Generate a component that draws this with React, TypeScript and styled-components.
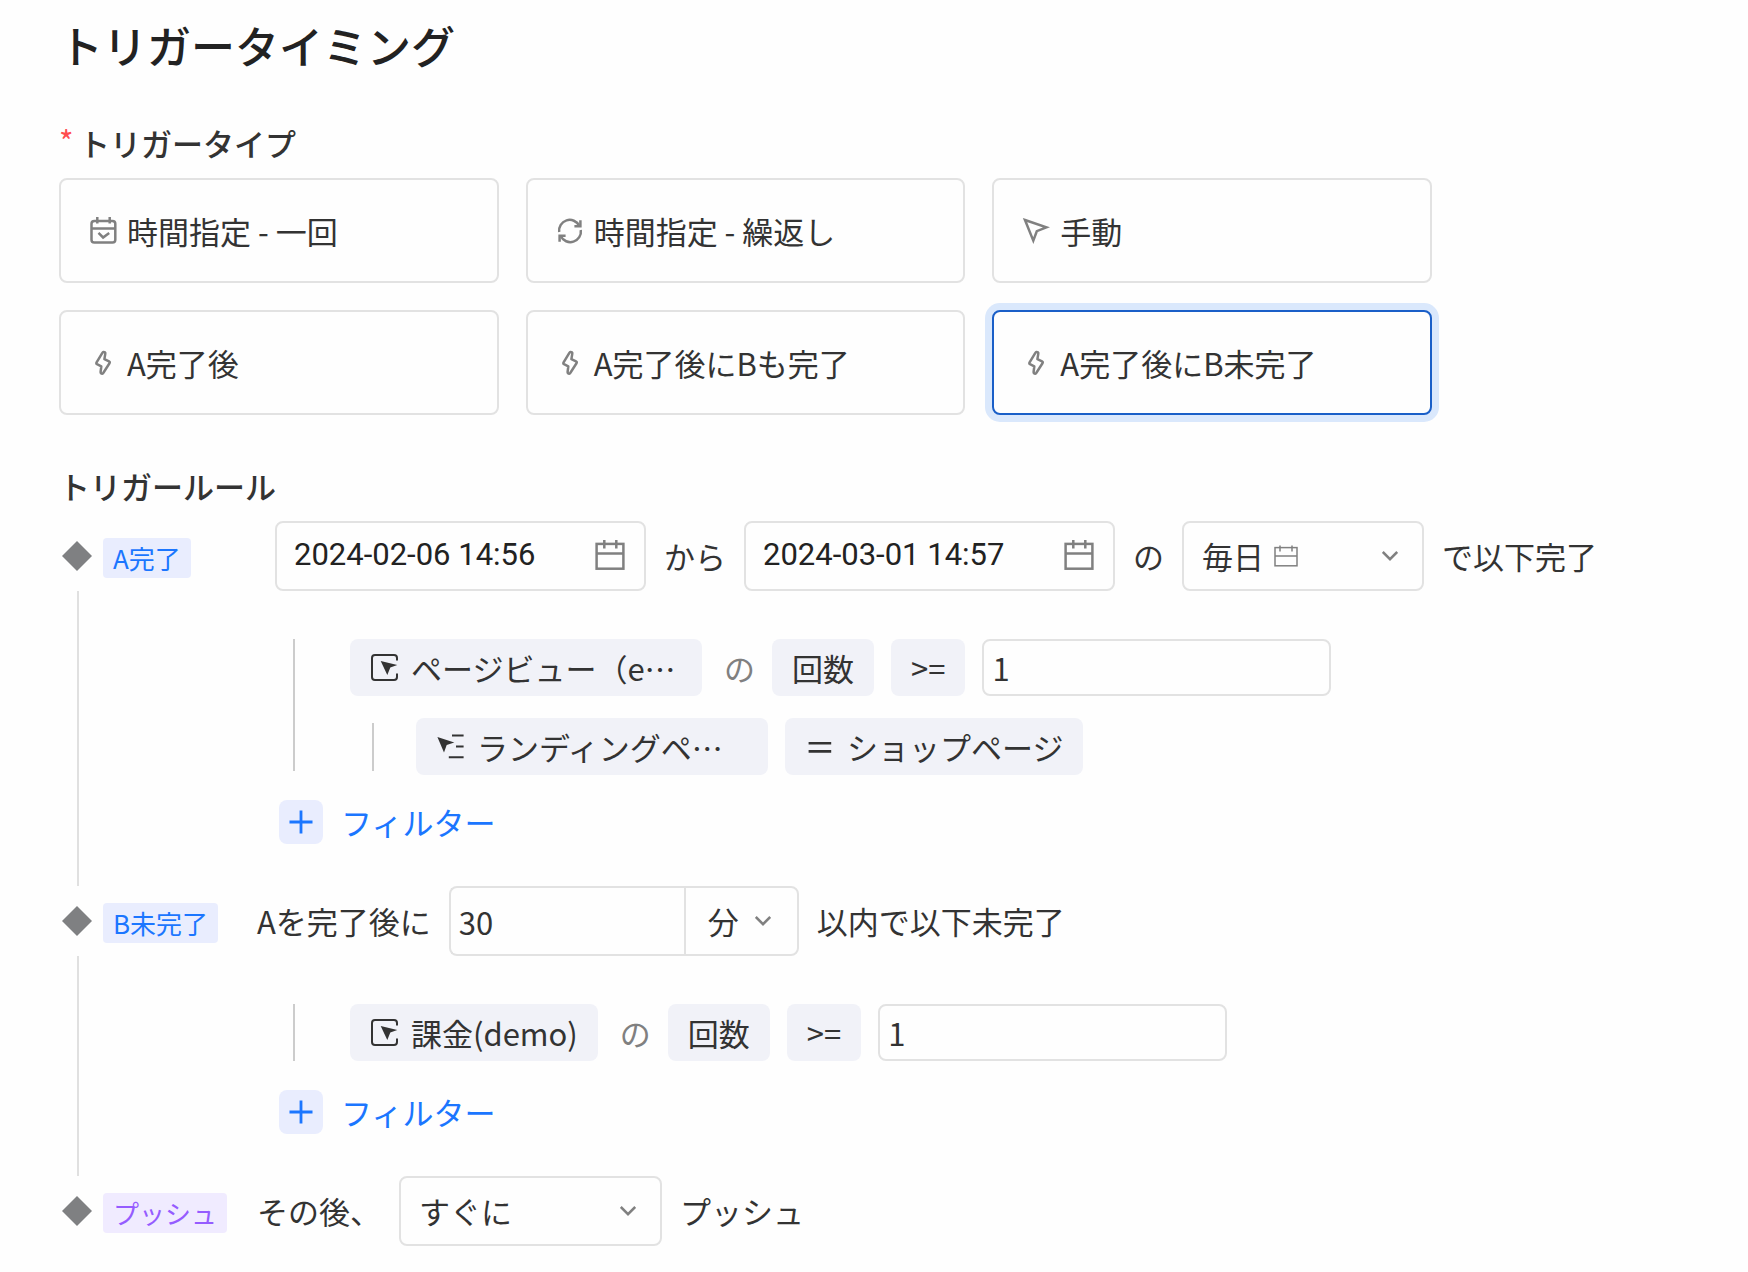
import React, { useState } from 'react';
import styled, { createGlobalStyle } from 'styled-components';

const color = {
  page: '#fefefe',
  title: '#222222',
  text: '#333333',
  muted: '#808080',
  border: '#e2e2e2',
  rail: '#e0e0e0',
  guide: '#cccccc',
  chip: '#f1f2f8',
  blue: '#1b76ff',
  blueSoft: '#e9edfe',
  blueStrong: '#1a5fc8',
  ring: '#dae8fc',
  purple: '#955cff',
  purpleSoft: '#f0ebff',
  red: '#ff4d4f',
};

const GlobalStyle = createGlobalStyle`
  *, *::before, *::after { box-sizing: border-box; }
  body {
    margin: 0;
    background: ${color.page};
    color: ${color.text};
    font-family: 'Noto Sans CJK JP', sans-serif;
    font-size: 31px;
    line-height: 44px;
  }
  input, select, button { font: inherit; color: inherit; }
`;

/* ---------- Page ---------- */

const Page = styled.main`
  padding: 15px 59px 26px;
`;

const Title = styled.h1`
  margin: 0 0 46px;
  color: ${color.title};
  font-size: 44px;
  font-weight: 500;
  line-height: 60px;
`;

const SectionTitle = styled.h2`
  display: flex;
  gap: 6px;
  margin: 0 0 13px;
  font-size: 31px;
  font-weight: 500;
  line-height: 44px;
`;

const Required = styled.span`
  width: 14px;
  color: ${color.red};
  font-size: 31px;
  font-weight: 400;
  line-height: 40px;
`;

/* ---------- Trigger type cards ---------- */

const CardGrid = styled.div`
  display: grid;
  grid-template-columns: repeat(3, minmax(0, 1fr));
  grid-auto-rows: 105px;
  gap: 27px;
  max-width: 1373px;
  margin-bottom: 49px;
`;

const Card = styled.label<{ $selected: boolean }>`
  display: flex;
  align-items: center;
  gap: 10px;
  padding: 0 28px;
  border: 2px solid ${(p) => (p.$selected ? color.blueStrong : color.border)};
  border-radius: 8px;
  background: ${color.page};
  box-shadow: ${(p) => (p.$selected ? `0 0 0 7px ${color.ring}` : 'none')};
  cursor: pointer;
`;

const HiddenRadio = styled.input`
  position: absolute;
  opacity: 0;
  pointer-events: none;
`;

/* ---------- Steps ---------- */

const Step = styled.section`
  display: grid;
  grid-template-columns: 36px minmax(0, 1fr);
  column-gap: 8px;
`;

const Rail = styled.div`
  display: flex;
  flex-direction: column;
`;

const Marker = styled.div`
  display: flex;
  align-items: center;
  justify-content: center;
  height: 70px;
`;

const RailLine = styled.div`
  flex: 1;
  margin-left: 18px;
  border-left: 2px solid ${color.rail};
`;

const StepHead = styled.div`
  display: flex;
  align-items: center;
  height: 70px;
  white-space: nowrap;
`;

const TagCell = styled.div`
  flex: none;
  display: flex;
  width: 154px;
`;

const Tag = styled.span<{ $tone: 'blue' | 'purple' }>`
  margin-top: 4px;
  padding: 0 10px;
  border-radius: 4px;
  background: ${(p) => (p.$tone === 'blue' ? color.blueSoft : color.purpleSoft)};
  color: ${(p) => (p.$tone === 'blue' ? color.blue : color.purple)};
  font-size: 26px;
  line-height: 40px;
`;

const Sentence = styled.div<{ $indent?: boolean }>`
  display: flex;
  align-items: center;
  gap: 18px;
  padding-left: ${(p) => (p.$indent ? '18px' : '0')};
`;

const StepBody = styled.div`
  display: flex;
  flex-direction: column;
  align-items: flex-start;
  gap: 29px;
  padding: 48px 0 42px 176px;
`;

/* ---------- Fields ---------- */

const DateField = styled.label`
  display: flex;
  align-items: center;
  width: 371px;
  height: 70px;
  padding: 0 19px 2px 17px;
  border: 2px solid ${color.border};
  border-radius: 8px;
`;

const DateInput = styled.input`
  flex: 1;
  min-width: 0;
  padding: 0;
  border: 0;
  outline: 0;
  background: transparent;
  color: ${color.title};
  font-family: Roboto, sans-serif;
`;

const SelectWrap = styled.div<{ $width: number }>`
  position: relative;
  width: ${(p) => p.$width}px;
`;

const Select = styled.select<{ $joined?: boolean }>`
  display: block;
  width: 100%;
  height: 70px;
  padding: 0 48px 0 ${(p) => (p.$joined ? '22px' : '18px')};
  border: 2px solid ${color.border};
  border-radius: ${(p) => (p.$joined ? '0 8px 8px 0' : '8px')};
  background: transparent;
  outline: 0;
  appearance: none;
`;

const ChevronSlot = styled.span<{ $joined?: boolean }>`
  position: absolute;
  top: 0;
  right: ${(p) => (p.$joined ? '28px' : '26px')};
  bottom: 0;
  display: flex;
  align-items: center;
  pointer-events: none;
`;

const SelectIconSlot = styled(ChevronSlot)`
  right: auto;
  left: 92px;
`;

const InputGroup = styled.div`
  display: flex;
  width: 350px;
`;

const GroupInput = styled.input`
  flex: 1;
  min-width: 0;
  height: 70px;
  padding: 0 8px;
  border: 2px solid ${color.border};
  border-right: 0;
  border-radius: 8px 0 0 8px;
  background: transparent;
  outline: 0;
`;

const CountInput = styled.input`
  width: 349px;
  height: 57px;
  padding: 0 8px;
  border: 2px solid ${color.border};
  border-radius: 8px;
  background: transparent;
  outline: 0;
`;

/* ---------- Conditions ---------- */

const ConditionGroup = styled.div`
  display: flex;
  flex-direction: column;
  margin-left: 14px;
  padding-left: 55px;
  border-left: 2px solid ${color.guide};
`;

const SubGroup = styled.div`
  display: flex;
  margin: 27px 0 0 22px;
  padding-left: 42px;
  border-left: 2px solid ${color.guide};
`;

const ConditionRow = styled.div<{ $overhang?: boolean }>`
  display: flex;
  align-items: center;
  gap: 17px;
  margin: ${(p) => (p.$overhang ? '-5px 0 -4px' : '0')};
`;

const Chip = styled.button<{ $wide?: boolean }>`
  display: flex;
  align-items: center;
  gap: 13px;
  width: ${(p) => (p.$wide ? '352px' : 'auto')};
  height: 57px;
  padding: 0 20px;
  border: 0;
  border-radius: 8px;
  background: ${color.chip};
  white-space: nowrap;
  cursor: pointer;
`;

const Particle = styled.span`
  padding-left: 5px;
  color: ${color.muted};
`;

const AddFilter = styled.button`
  display: flex;
  align-items: center;
  gap: 18px;
  height: 44px;
  padding: 0;
  border: 0;
  background: transparent;
  color: ${color.blue};
  cursor: pointer;
`;

const PlusBox = styled.span`
  display: flex;
  align-items: center;
  justify-content: center;
  width: 44px;
  height: 44px;
  border-radius: 8px;
  background: ${color.blueSoft};
`;

/* ---------- Icons ---------- */

const Icon = styled.svg`
  flex: none;
  display: block;
  fill: none;
  stroke: ${color.muted};
  stroke-width: 2.5;
`;

const DarkIcon = styled(Icon)`
  stroke: ${color.text};
  stroke-width: 2;
`;

const CalendarCheckIcon = () => (
  <Icon width="28" height="28" viewBox="0 0 28 28" aria-hidden="true">
    <rect x="2.5" y="4" width="23.8" height="21.6" rx="2.8" />
    <path d="M2.3 11.5H26.3M8.3 0V6.5M20.7 0V6.5" />
    <path d="M9.5 15.9L14.1 20.5L20.2 15.9" />
  </Icon>
);

const RepeatIcon = () => (
  <Icon width="28" height="28" viewBox="0 0 28 28" aria-hidden="true">
    <path d="M3.2 15A10.6 10.6 0 0 1 23.2 8.8" />
    <path d="M24.4 3.2V9.2H18.4" />
    <path d="M24.8 13A10.6 10.6 0 0 1 4.8 19.2" />
    <path d="M3.6 24.8V18.8H9.6" />
  </Icon>
);

const CursorIcon = () => (
  <Icon width="28" height="28" viewBox="0 0 28 28" aria-hidden="true">
    <path d="M3 3L24.4 10.4L14.8 14.2L11.3 23.6Z" />
  </Icon>
);

const BoltIcon = () => (
  <Icon width="28" height="28" viewBox="0 0 28 28" strokeLinejoin="round" aria-hidden="true">
    <path d="M13.2 4.1Q14.4 2.3 16 3.4Q16.5 3.8 16.3 4.6L15.4 10.1L20 12.3Q21.3 13 20.5 14.2L14.4 23.7Q13.3 25.2 12 24.3Q11.5 23.8 11.6 23L12.3 17.3L8 15.2Q6.9 14.6 7.6 13.4Z" />
  </Icon>
);

const CalendarIcon = () => (
  <Icon width="30" height="30" viewBox="0 0 30 30" aria-hidden="true">
    <rect x="1.6" y="3.9" width="26.8" height="24.8" />
    <path d="M1.6 13.4H28.4M9.3 0V8.6M21.3 0V8.6" />
  </Icon>
);

const SmallCalendarIcon = () => (
  <Icon width="24" height="22" viewBox="0 0 24 22" aria-hidden="true">
    <g strokeWidth="1.5">
      <rect x="1" y="2.6" width="22" height="18.2" />
      <path d="M1 11H23M6 0.4V6.4M18 0.4V6.4" />
    </g>
  </Icon>
);

const ChevronIcon = () => (
  <Icon width="16" height="10" viewBox="0 0 16 10" aria-hidden="true">
    <path d="M0.8 1L8 8.2L15.2 1" />
  </Icon>
);

const DiamondIcon = () => (
  <svg width="30" height="30" viewBox="0 0 30 30" aria-hidden="true">
    <path d="M15 0L30 15L15 30L0 15Z" fill="#7f8082" />
  </svg>
);

const EventIcon = () => (
  <DarkIcon width="28" height="28" viewBox="0 0 28 28" aria-hidden="true">
    <path d="M27 6.5V4A3 3 0 0 0 24 1H5A3 3 0 0 0 2 4V23A3 3 0 0 0 5 26H24A3 3 0 0 0 27 23V19.5" />
    <path d="M10.7 7L27.3 11L20.3 13.5L17.3 21Z" fill={color.text} stroke="none" />
  </DarkIcon>
);

const PropertyIcon = () => (
  <DarkIcon width="28" height="28" viewBox="0 0 28 28" aria-hidden="true">
    <path d="M1.4 3.9L18.3 9.6L10.7 12L8 19.5Z" fill={color.text} stroke="none" />
    <path d="M16 2.6H27.6M20 13.5H27.6M12.8 24.2H27.6" />
  </DarkIcon>
);

const EqualsIcon = () => (
  <DarkIcon width="29" height="28" viewBox="0 0 29 28" aria-hidden="true">
    <path d="M3.6 10.2H26.2M3.6 18.4H26.2" strokeWidth="2.6" />
  </DarkIcon>
);

const PlusIcon = () => (
  <svg width="24" height="24" viewBox="0 0 24 24" aria-hidden="true">
    <path d="M12 0.5V23.5M0.5 12H23.5" stroke={color.blue} strokeWidth="2.8" />
  </svg>
);

/* ---------- Composed parts ---------- */

const triggerTypes = [
  { id: 'once', label: '時間指定 - 一回', icon: <CalendarCheckIcon /> },
  { id: 'repeat', label: '時間指定 - 繰返し', icon: <RepeatIcon /> },
  { id: 'manual', label: '手動', icon: <CursorIcon /> },
  { id: 'a', label: 'A完了後', icon: <BoltIcon /> },
  { id: 'ab', label: 'A完了後にBも完了', icon: <BoltIcon /> },
  { id: 'a-not-b', label: 'A完了後にB未完了', icon: <BoltIcon /> },
];

const DateTime = ({ label, value }: { label: string; value: string }) => (
  <DateField>
    <DateInput type="text" defaultValue={value} aria-label={label} />
    <CalendarIcon />
  </DateField>
);

const CountCondition = ({ label }: { label: string }) => (
  <>
    <Particle>の</Particle>
    <Chip type="button">回数</Chip>
    <Chip type="button">&gt;=</Chip>
    <CountInput type="text" inputMode="numeric" defaultValue="1" aria-label={label} />
  </>
);

const FilterButton = () => (
  <AddFilter type="button">
    <PlusBox>
      <PlusIcon />
    </PlusBox>
    フィルター
  </AddFilter>
);

const StepRail = ({ last }: { last?: boolean }) => (
  <Rail>
    <Marker>
      <DiamondIcon />
    </Marker>
    {!last && <RailLine />}
  </Rail>
);

export default function App() {
  const [selected, setSelected] = useState('a-not-b');

  return (
    <>
      <GlobalStyle />
      <Page lang="ja">
        <Title>トリガータイミング</Title>

        <SectionTitle id="trigger-type">
          <Required>*</Required>
          トリガータイプ
        </SectionTitle>
        <CardGrid role="radiogroup" aria-labelledby="trigger-type">
          {triggerTypes.map((t) => (
            <Card key={t.id} $selected={t.id === selected}>
              <HiddenRadio
                type="radio"
                name="trigger-type"
                value={t.id}
                checked={t.id === selected}
                onChange={() => setSelected(t.id)}
              />
              {t.icon}
              <span>{t.label}</span>
            </Card>
          ))}
        </CardGrid>

        <SectionTitle>トリガールール</SectionTitle>

        <Step>
          <StepRail />
          <div>
            <StepHead>
              <TagCell>
                <Tag $tone="blue">A完了</Tag>
              </TagCell>
              <Sentence $indent>
                <DateTime label="開始日時" value="2024-02-06 14:56" />
                <span>から</span>
                <DateTime label="終了日時" value="2024-03-01 14:57" />
                <span>の</span>
                <SelectWrap $width={242}>
                  <Select aria-label="頻度" defaultValue="毎日">
                    <option>毎日</option>
                  </Select>
                  <SelectIconSlot>
                    <SmallCalendarIcon />
                  </SelectIconSlot>
                  <ChevronSlot>
                    <ChevronIcon />
                  </ChevronSlot>
                </SelectWrap>
                <span>で以下完了</span>
              </Sentence>
            </StepHead>
            <StepBody>
              <ConditionGroup>
                <ConditionRow>
                  <Chip type="button" $wide>
                    <EventIcon />
                    ページビュー（e⋯
                  </Chip>
                  <CountCondition label="Aの回数" />
                </ConditionRow>
                <SubGroup>
                  <ConditionRow $overhang>
                    <Chip type="button" $wide>
                      <PropertyIcon />
                      ランディングペ…
                    </Chip>
                    <Chip type="button">
                      <EqualsIcon />
                      ショップページ
                    </Chip>
                  </ConditionRow>
                </SubGroup>
              </ConditionGroup>
              <FilterButton />
            </StepBody>
          </div>
        </Step>

        <Step>
          <StepRail />
          <div>
            <StepHead>
              <TagCell>
                <Tag $tone="blue">B未完了</Tag>
              </TagCell>
              <Sentence>
                <span>Aを完了後に</span>
                <InputGroup>
                  <GroupInput type="text" inputMode="numeric" defaultValue="30" aria-label="期間" />
                  <SelectWrap $width={115}>
                    <Select $joined aria-label="単位" defaultValue="分">
                      <option>分</option>
                    </Select>
                    <ChevronSlot $joined>
                      <ChevronIcon />
                    </ChevronSlot>
                  </SelectWrap>
                </InputGroup>
                <span>以内で以下未完了</span>
              </Sentence>
            </StepHead>
            <StepBody>
              <ConditionGroup>
                <ConditionRow>
                  <Chip type="button">
                    <EventIcon />
                    課金(demo)
                  </Chip>
                  <CountCondition label="Bの回数" />
                </ConditionRow>
              </ConditionGroup>
              <FilterButton />
            </StepBody>
          </div>
        </Step>

        <Step>
          <StepRail last />
          <StepHead>
            <TagCell>
              <Tag $tone="purple">プッシュ</Tag>
            </TagCell>
            <Sentence>
              <span>その後、</span>
              <SelectWrap $width={263}>
                <Select aria-label="送信タイミング" defaultValue="すぐに">
                  <option>すぐに</option>
                </Select>
                <ChevronSlot>
                  <ChevronIcon />
                </ChevronSlot>
              </SelectWrap>
              <span>プッシュ</span>
            </Sentence>
          </StepHead>
        </Step>
      </Page>
    </>
  );
}
